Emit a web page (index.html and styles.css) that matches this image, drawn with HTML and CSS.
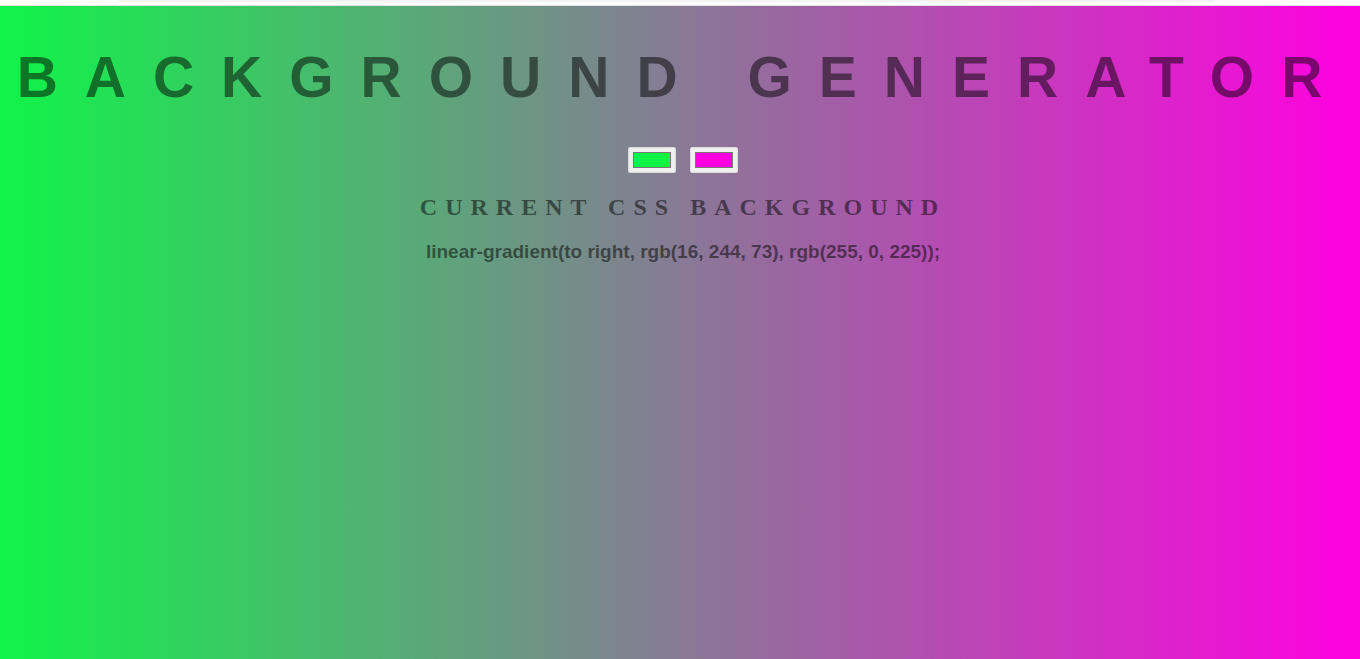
FILE: index.html
```html
<!DOCTYPE html>
<html lang="en">
<head>
<meta charset="utf-8">
<title>Background Generator</title>
<link rel="stylesheet" href="styles.css">
</head>
<body>
<div class="topbar"><div class="topbar-thumb"></div></div>
<main class="page">
  <h1 class="title">BACKGROUND GENERATOR</h1>
  <div class="controls">
    <input class="picker" type="color" value="#10f449">
    <input class="picker" type="color" value="#ff00e1">
  </div>
  <h2 class="subtitle">CURRENT CSS BACKGROUND</h2>
  <h3 class="code">linear-gradient(to right, rgb(16, 244, 73), rgb(255, 0, 225));</h3>
</main>
</body>
</html>
```
FILE: styles.css
```css
html, body {
  margin: 0;
  padding: 0;
  height: 100%;
}

body {
  display: flex;
  flex-direction: column;
  background: #ffffff;
  overflow: hidden;
}

.topbar {
  height: 5px;
  flex: 0 0 5px;
  background: #ffffff;
  border-bottom: 1px solid #e3e3e3;
  position: relative;
}

.topbar-thumb {
  margin-left: 118px;
  width: 1097px;
  height: 2px;
  background: #f3f3f3;
}

.page {
  flex: 1;
  background: linear-gradient(to right, rgb(16, 244, 73), rgb(255, 0, 225));
  text-align: center;
  padding: 0 0 0 6px;
  display: flex;
  flex-direction: column;
  align-items: center;
  color: rgba(0, 0, 0, 0.5);
}

.title {
  margin: 38px 0 0;
  font-family: "Liberation Sans", Arial, sans-serif;
  font-weight: bold;
  font-size: 57px;
  line-height: 66px;
  letter-spacing: 27px;
  white-space: nowrap;
}

.controls {
  margin-top: 37px;
  display: flex;
  gap: 14px;
  justify-content: center;
}

.picker {
  -webkit-appearance: none;
  appearance: none;
  box-sizing: border-box;
  width: 48px;
  height: 26px;
  margin: 0;
  padding: 4px;
  background: #efefef;
  border: 1px solid #dadada;
  border-radius: 2px;
  cursor: pointer;
}

.picker::-webkit-color-swatch-wrapper {
  padding: 0;
}

.picker::-webkit-color-swatch {
  border: 1px solid #777777;
  border-radius: 0;
}

.subtitle {
  margin: 20px 0 0;
  font-family: "Liberation Serif", "Times New Roman", serif;
  font-weight: bold;
  font-size: 24px;
  line-height: 28px;
  letter-spacing: 8px;
}

.code {
  margin: 20px 0 0;
  font-family: "Liberation Sans", Arial, sans-serif;
  font-weight: bold;
  font-size: 19px;
  line-height: 22px;
}
```
